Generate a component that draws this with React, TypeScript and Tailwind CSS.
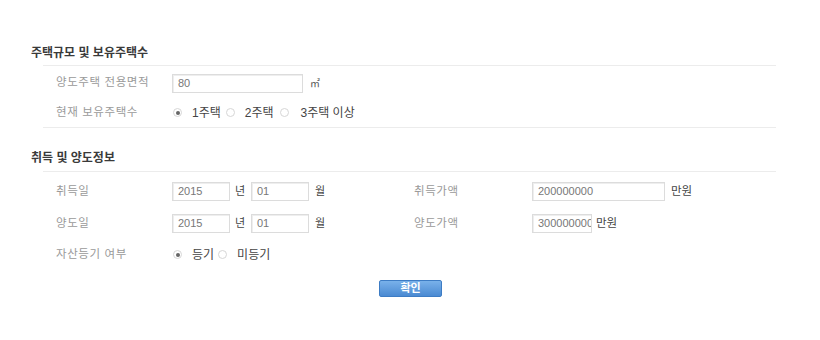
const KR = "font-['Liberation_Sans','Noto_Sans_CJK_KR',sans-serif]";

function Field({ value, width }: { value: string; width: string }) {
  return (
    <div
      className={`${width} h-[19px] border border-[#dcdcdc] shadow-[inset_1px_1px_0_#eee] bg-white pl-[5px] text-[11px] leading-[17px] text-[#777] overflow-hidden whitespace-nowrap`}
    >
      {value}
    </div>
  );
}

function Radio({ checked }: { checked?: boolean }) {
  return (
    <span className="w-[9px] h-[9px] rounded-full border border-[#d6d6d6] bg-white flex items-center justify-center">
      {checked ? <span className="w-[4px] h-[4px] rounded-full bg-[#666]" /> : null}
    </span>
  );
}

function Label({ children, width = "w-[116px]" }: { children: React.ReactNode; width?: string }) {
  return <div className={`${width} text-[11.5px] text-[#9a9a9a] tracking-[0.6px]`}>{children}</div>;
}

export default function App() {
  return (
    <div className={`w-[820px] h-[340px] bg-white ${KR} pt-[45px]`}>
      {/* 주택규모 */}
      <h2 className="pl-[31px] h-[16px] text-[12px] leading-[16px] font-bold text-[#3a3a3a]">
        주택규모 및 보유주택수
      </h2>
      <div className="ml-[43px] w-[733px] h-[5px] border-b border-[#ececec]" />
      <div className="pl-[56px] pt-[2px]">
        <div className="h-[30px] flex items-center">
          <Label>양도주택 전용면적</Label>
          <Field value="80" width="w-[131px]" />
          <span className="ml-[7px] text-[10px] text-[#555]">㎡</span>
        </div>
        <div className="h-[29px] flex items-center">
          <Label>현재 보유주택수</Label>
          <div className="flex items-center text-[12px] text-[#444] pl-[1px]">
            <Radio checked />
            <span className="ml-[10px]">1주택</span>
            <span className="ml-[5px]"><Radio /></span>
            <span className="ml-[10px]">2주택</span>
            <span className="ml-[6px]"><Radio /></span>
            <span className="ml-[12px]">3주택 이상</span>
          </div>
        </div>
      </div>
      <div className="ml-[43px] w-[733px] border-b border-[#ececec]" />

      {/* 취득 및 양도정보 */}
      <h2 className="mt-[22px] pl-[31px] h-[16px] text-[12px] leading-[16px] font-bold text-[#3a3a3a]">
        취득 및 양도정보
      </h2>
      <div className="ml-[43px] w-[733px] h-[6px] border-b border-[#ececec]" />
      <div className="pl-[56px] pt-[3px]">
        <div className="h-[33px] flex items-center">
          <div className="w-[358px] flex items-center">
            <Label>취득일</Label>
            <Field value="2015" width="w-[58px]" />
            <span className="ml-[5px] w-[16px] text-[11px] text-[#444]">년</span>
            <Field value="01" width="w-[58px]" />
            <span className="ml-[6px] text-[11px] text-[#444]">월</span>
          </div>
          <Label width="w-[118px]">취득가액</Label>
          <Field value="200000000" width="w-[133px]" />
          <span className="ml-[6px] text-[11.5px] text-[#444]">만원</span>
        </div>
        <div className="h-[31px] flex items-center">
          <div className="w-[358px] flex items-center">
            <Label>양도일</Label>
            <Field value="2015" width="w-[58px]" />
            <span className="ml-[5px] w-[16px] text-[11px] text-[#444]">년</span>
            <Field value="01" width="w-[58px]" />
            <span className="ml-[6px] text-[11px] text-[#444]">월</span>
          </div>
          <Label width="w-[118px]">양도가액</Label>
          <Field value="300000000" width="w-[60px]" />
          <span className="ml-[4px] text-[11.5px] text-[#444]">만원</span>
        </div>
        <div className="h-[31px] flex items-center">
          <Label>자산등기 여부</Label>
          <div className="flex items-center text-[12px] text-[#444] pl-[1px]">
            <Radio checked />
            <span className="ml-[10px]">등기</span>
            <span className="ml-[4px]"><Radio /></span>
            <span className="ml-[10px]">미등기</span>
          </div>
        </div>
      </div>

      <div className="mt-[10px] flex justify-center">
        <button className="ml-[1px] w-[63px] h-[17px] rounded-[2px] border border-[#3d7cc4] bg-gradient-to-b from-[#79b1ea] to-[#4a8ad2] text-white text-[11px] font-bold leading-[15px]">
          확인
        </button>
      </div>
    </div>
  );
}
